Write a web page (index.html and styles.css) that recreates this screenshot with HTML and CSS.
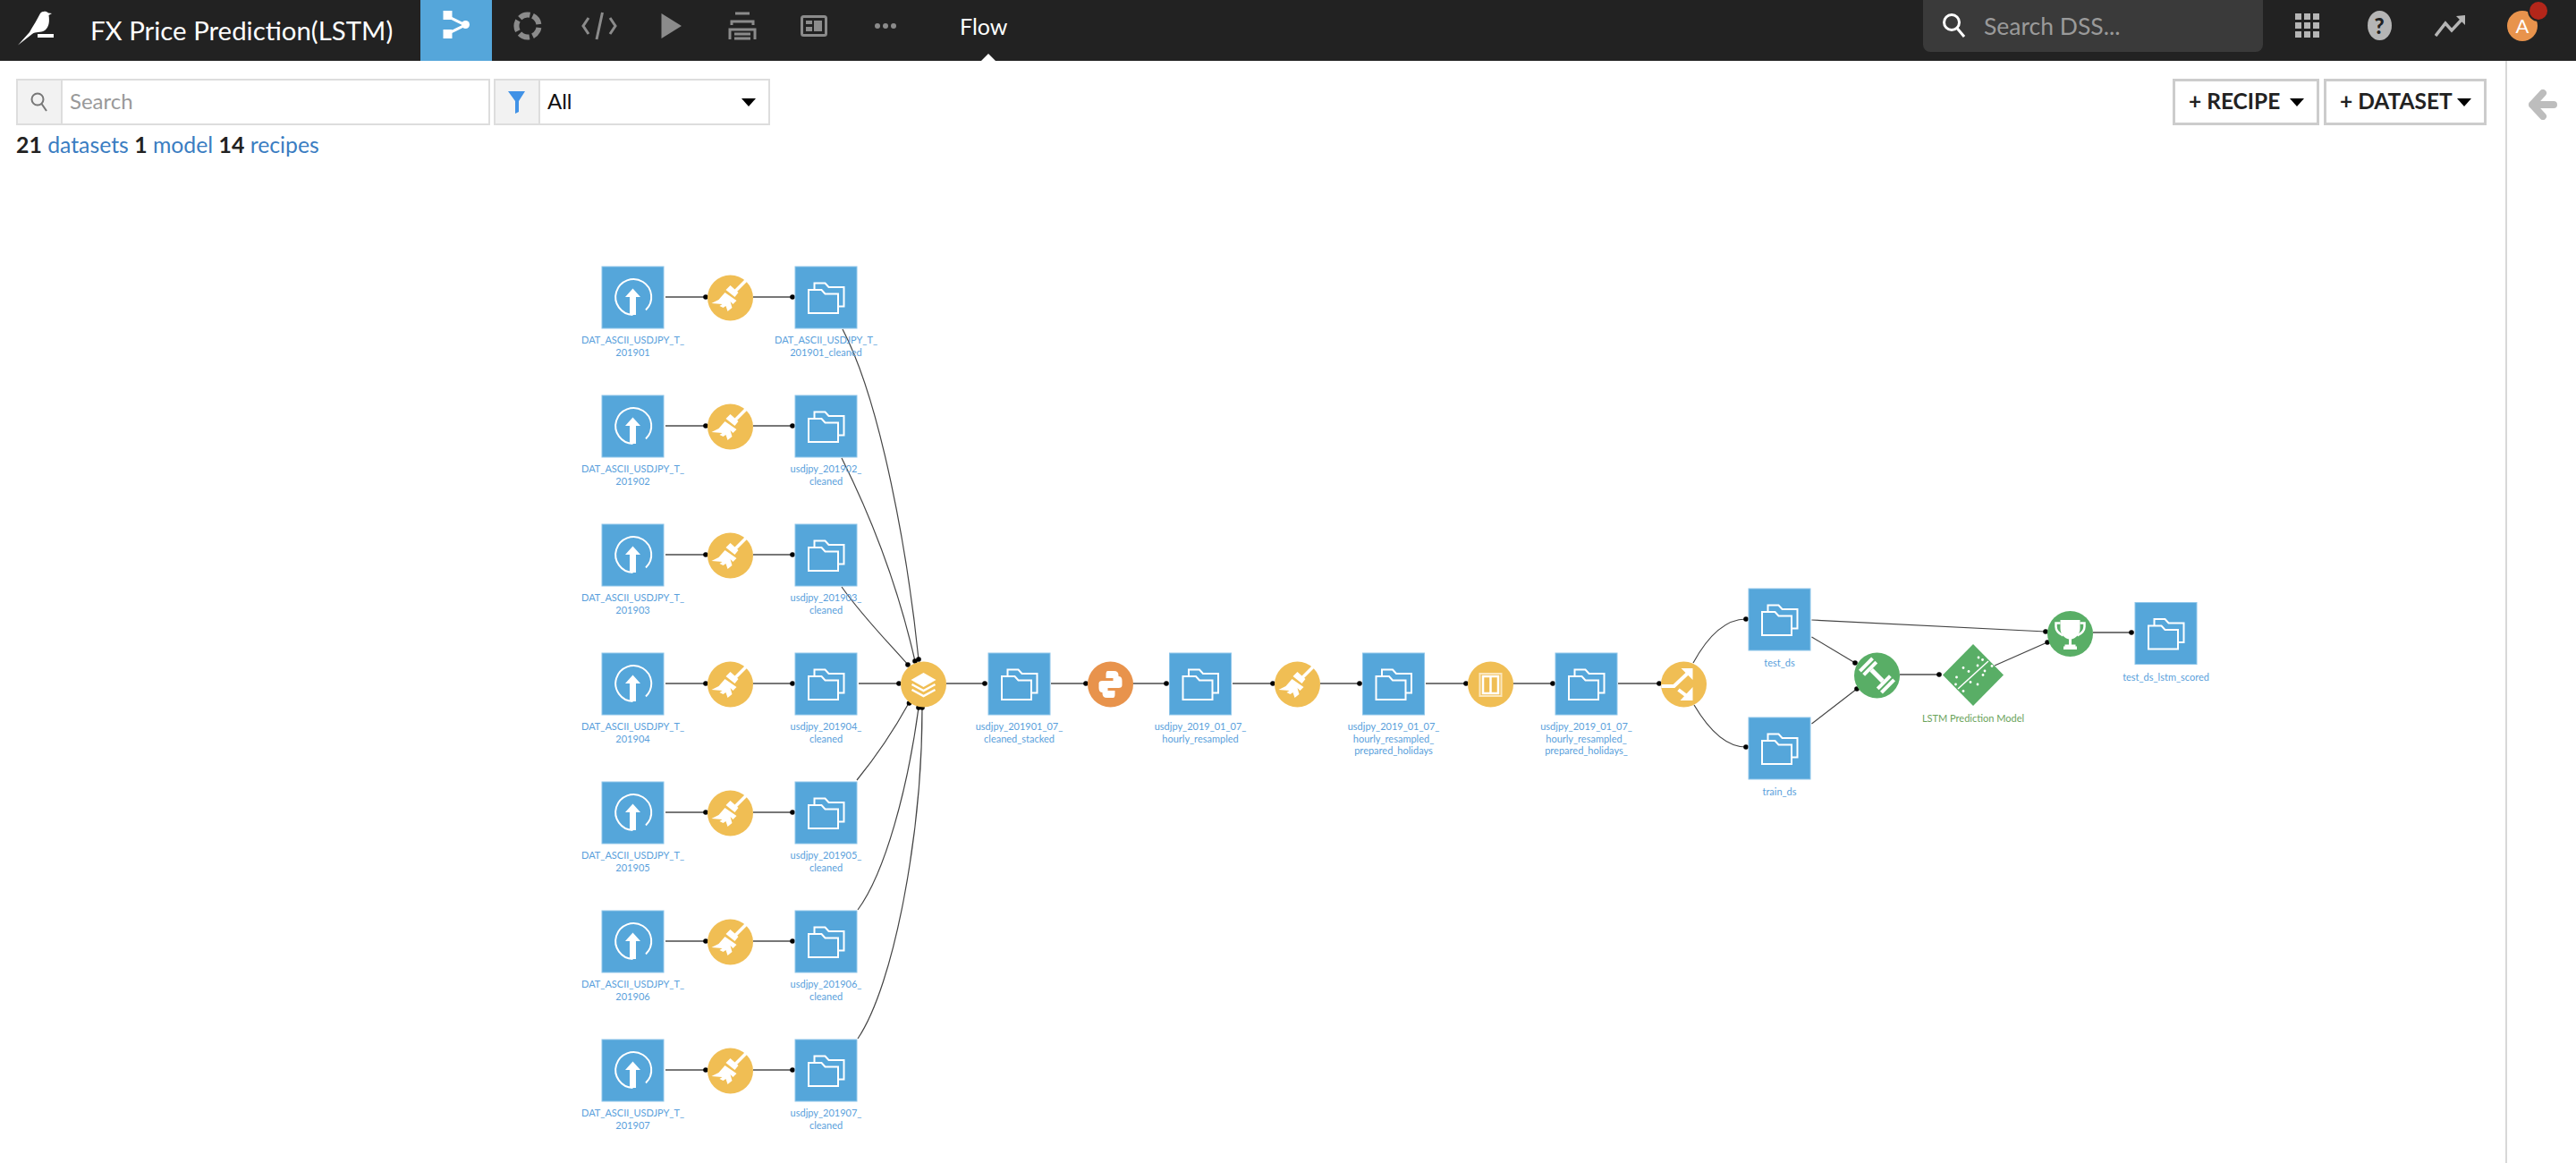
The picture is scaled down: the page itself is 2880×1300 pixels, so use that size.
FILE: index.html
```html
<!DOCTYPE html>
<html lang="en">
<head>
<meta charset="utf-8">
<title>FX Price Prediction(LSTM)</title>
<link rel="stylesheet" href="styles.css">
</head>
<body>
<header class="topbar">
  <div class="brand">
    <svg class="bird" width="78" height="68" viewBox="0 0 78 68"><path class="fill-white" d="M20 50.500 L33 36 C37 29 42 21 45 15 C47 12 52 12 54 14.500 L58 15 L54.500 17 C55.500 24 55 30 50 34 C45 37 40 35 36 38 Z"/><rect class="fill-white" x="42" y="38" width="18" height="4"/></svg>
    <span class="project">FX Price Prediction(LSTM)</span>
  </div>
  <nav class="tabs">
    <a class="tab tab-active"><svg width="40" height="40" viewBox="0 0 40 40"><path class="icon-line-white" d="M10 9 L30 19 L10 29"/><rect class="fill-white" x="5.500" y="3" width="10" height="10"/><rect class="fill-white" x="5.500" y="24" width="10" height="10"/><circle class="fill-white" cx="30.500" cy="18.500" r="4.500"/></svg></a>
    <a class="tab"><svg width="40" height="40" viewBox="0 0 40 40"><circle class="icon-ring" cx="20" cy="20" r="12.500" stroke-dasharray="12 3.700" transform="rotate(-64 20 20)"/></svg></a>
    <a class="tab"><svg width="40" height="40" viewBox="0 0 40 40"><path class="icon-line" d="M8 11 L2 20 L8 29 M32 11 L38 20 L32 29 M23.500 5 L17 35"/></svg></a>
    <a class="tab"><svg width="40" height="40" viewBox="0 0 40 40"><polygon class="fill-grey" points="9.500,6 32,20 9.500,34"/></svg></a>
    <a class="tab"><svg width="40" height="40" viewBox="0 0 40 40"><path class="icon-line" d="M12 6 H28 M8 19 V15 H32 V19 M6 35 V24 H34 V35 M11 29 H29 M11 34 H29"/></svg></a>
    <a class="tab"><svg width="40" height="40" viewBox="0 0 40 40"><rect class="icon-line" x="6.500" y="9.500" width="27" height="21" rx="2"/><rect class="fill-grey" x="11" y="14" width="7" height="4"/><rect class="fill-grey" x="11" y="21" width="7" height="5"/><rect class="fill-grey" x="20" y="14" width="9" height="12"/></svg></a>
    <a class="tab"><svg width="40" height="40" viewBox="0 0 40 40"><circle class="fill-grey" cx="11" cy="20" r="3"/><circle class="fill-grey" cx="20" cy="20" r="3"/><circle class="fill-grey" cx="29" cy="20" r="3"/></svg></a>
  </nav>
  <div class="section-name">Flow</div>
  <div class="top-right">
    <div class="global-search">
      <svg width="28" height="34" viewBox="0 0 28 34"><circle class="search-white" cx="12" cy="13" r="8.500"/><path class="search-white" d="M18 19.500 L26 29"/></svg>
      <span>Search DSS...</span>
    </div>
    <a class="tab"><svg width="28" height="28" viewBox="0 0 28 28"><g class="fill-light"><rect x="0" y="0" width="7" height="7"/><rect x="10" y="0" width="7" height="7"/><rect x="20" y="0" width="7" height="7"/><rect x="0" y="10" width="7" height="7"/><rect x="10" y="10" width="7" height="7"/><rect x="20" y="10" width="7" height="7"/><rect x="0" y="20" width="7" height="7"/><rect x="10" y="20" width="7" height="7"/><rect x="20" y="20" width="7" height="7"/></g></svg></a>
    <a class="tab"><span class="help">?</span></a>
    <a class="tab"><svg width="36" height="24" viewBox="0 0 36 24"><path class="trend" d="M1 23 L12 9 L19 17 L32 3"/><polygon class="fill-light" points="24,1 34,0 34,11"/></svg></a>
    <a class="tab avatar-tab"><span class="avatar">A</span><span class="badge"></span></a>
  </div>
</header>
<div class="page">
  <main class="canvas">
    <svg class="flow" width="2801" height="1232" viewBox="0 68 2801 1232">
      <defs>
        <g id="folder"><path class="folder-line" d="M-13 -8 V-15.500 H-1 L3 -11 H20 V10.500 H13.500"/><path class="folder-line" d="M-19.500 18 V-8 H-5 L-1 -3.500 H13.500 V18 Z"/></g>
        <g id="upload"><path class="upload-line" d="M0 20 A20 20 0 1 1 14.500 14.500"/><path class="fill-white" d="M0 -9.500 L8.500 0 H3.500 V20 H-3.500 V0 H-8.500 Z"/></g>
        <g id="broom"><path class="broom-line" d="M17.500 -19.500 L4 -6"/><polygon class="fill-white" points="-5,-9 0,-14 9,-6 5,-1"/><polygon class="fill-white" points="-6,-6 7,3 3,7 0,4 2,11 -3,15 -5,9 -8,11 -12,9 -9,7 -21,6 -13,2"/></g>
        <g id="stack"><polygon class="fill-white" points="0,-13 14,-5 0,3 -14,-5"/><path class="chev" d="M-13 0 L0 7 L13 0 M-13 6 L0 13 L13 6"/></g>
        <g id="python"><path class="fill-white" id="py-half" d="M-3 -15 H4 Q9 -15 9 -10 V-4 Q9 1 4 1 H-3 Q-6 1 -6 4 V9 H-9 Q-13 9 -13 4 V-1 Q-13 -4 -9 -4 H3 V-7 H-5 V-11 Q-5 -15 -3 -15 Z"/><use href="#py-half" transform="rotate(180)"/></g>
        <g id="sync"><rect class="sync-outer" x="-12" y="-12" width="24" height="25"/><path class="sync-inner" d="M-8.500 -9 H8.500 V10 H-8.500 Z M0 -9 V10"/></g>
        <g id="split"><path class="split-line" d="M-25 2 H-11 L6 -14"/><polygon class="fill-white" points="-3,-18 10,-18 10,-5"/><path class="split-line" d="M-6 6 L6 15"/><polygon class="fill-white" points="10,3 10,18 -4,18"/></g>
        <g id="dumbbell" transform="rotate(45)"><rect class="fill-white" x="-9" y="-2.500" width="18" height="5"/><rect class="fill-white" x="-13" y="-10" width="4" height="20"/><rect class="fill-white" x="-19" y="-10" width="4" height="20"/><rect class="fill-white" x="9" y="-10" width="4" height="20"/><rect class="fill-white" x="15" y="-10" width="4" height="20"/></g>
        <g id="trophy"><path class="fill-white" d="M-11 -15.500 H11 V-6 C11 1 6 5 1.500 6 V12 H6 V14 H7.500 V17.500 H-7.500 V14 H-6 V12 H-1.500 V6 C-6 5 -11 1 -11 -6 Z"/><path class="trophy-line" d="M-11 -12 H-16 V-8 C-16 -3 -12 0 -8 2 M11 -12 H16 V-8 C16 -3 12 0 8 2"/></g>
        <circle id="dot" r="2.800"/>
      </defs>

      <g class="edges">
        <path d="M744 332 H789"/><path d="M842 332 H886"/>
        <path d="M744 476 H789"/><path d="M842 476 H886"/>
        <path d="M744 620 H789"/><path d="M842 620 H886"/>
        <path d="M744 764 H789"/><path d="M842 764 H886"/>
        <path d="M744 908 H789"/><path d="M842 908 H886"/>
        <path d="M744 1052 H789"/><path d="M842 1052 H886"/>
        <path d="M744 1196 H789"/><path d="M842 1196 H886"/>
        <path d="M960 764 H1005"/><path d="M1058 764 H1101"/><path d="M1175 764 H1214"/><path d="M1266 764 H1304"/>
        <path d="M1378 764 H1423"/><path d="M1476 764 H1520"/><path d="M1594 764 H1639"/><path d="M1691 764 H1736"/><path d="M1809 764 H1855"/>
        <path d="M2124 754 H2168"/><path d="M2340 707 H2383"/>
      </g>
      <g class="links">
        <path d="M942 368 C985 450 1015 620 1027 737"/>
        <path d="M941 512 C975 580 1005 660 1023 739"/>
        <path d="M941 656 C965 690 995 720 1015 743"/>
        <path d="M958 872 C980 845 1000 815 1016 786"/>
        <path d="M959 1017 C990 975 1015 880 1027 791"/>
        <path d="M959 1161 C1000 1100 1031 930 1031 791"/>
        <path d="M1893 741 C1910 710 1930 692 1952 692"/>
        <path d="M1894 788 C1910 815 1930 835 1952 835"/>
        <path d="M2025.500 693 L2287 706"/>
        <path d="M2025.500 712 L2074 741"/>
        <path d="M2025.500 809 L2076 770"/>
        <path d="M2230 744 L2289 718"/>
      </g>
      <g class="dots">
        <use href="#dot" x="789" y="332"/><use href="#dot" x="886" y="332"/>
        <use href="#dot" x="789" y="476"/><use href="#dot" x="886" y="476"/>
        <use href="#dot" x="789" y="620"/><use href="#dot" x="886" y="620"/>
        <use href="#dot" x="789" y="764"/><use href="#dot" x="886" y="764"/>
        <use href="#dot" x="789" y="908"/><use href="#dot" x="886" y="908"/>
        <use href="#dot" x="789" y="1052"/><use href="#dot" x="886" y="1052"/>
        <use href="#dot" x="789" y="1196"/><use href="#dot" x="886" y="1196"/>
        <use href="#dot" x="1027" y="737"/><use href="#dot" x="1023" y="739"/><use href="#dot" x="1015" y="743"/><use href="#dot" x="1005" y="764"/><use href="#dot" x="1016.500" y="786"/><use href="#dot" x="1027" y="791"/><use href="#dot" x="1031" y="791"/>
        <use href="#dot" x="1101" y="764"/><use href="#dot" x="1214" y="764"/><use href="#dot" x="1304" y="764"/><use href="#dot" x="1423" y="764"/><use href="#dot" x="1520" y="764"/><use href="#dot" x="1639" y="764"/><use href="#dot" x="1736" y="764"/><use href="#dot" x="1855" y="764"/>
        <use href="#dot" x="1952" y="692"/><use href="#dot" x="1952" y="835"/>
        <use href="#dot" x="2074" y="741"/><use href="#dot" x="2076" y="770"/><use href="#dot" x="2168" y="754"/><use href="#dot" x="2287" y="706"/><use href="#dot" x="2289" y="718"/><use href="#dot" x="2383" y="707"/>
      </g>

      <!-- Row 1 -->
      <g transform="translate(707.500 332)"><rect class="ds" x="-34.500" y="-34" width="69" height="69"/><use href="#upload"/><text class="lbl" y="52"><tspan x="0">DAT_ASCII_USDJPY_T_</tspan><tspan x="0" dy="13.500">201901</tspan></text></g>
      <g transform="translate(816.500 333)"><circle class="rc-y" r="25.500"/><use href="#broom"/></g>
      <g transform="translate(923.500 332)"><rect class="ds" x="-34.500" y="-34" width="69" height="69"/><use href="#folder"/><text class="lbl" y="52"><tspan x="0">DAT_ASCII_USDJPY_T_</tspan><tspan x="0" dy="13.500">201901_cleaned</tspan></text></g>
      <!-- Row 2 -->
      <g transform="translate(707.500 476)"><rect class="ds" x="-34.500" y="-34" width="69" height="69"/><use href="#upload"/><text class="lbl" y="52"><tspan x="0">DAT_ASCII_USDJPY_T_</tspan><tspan x="0" dy="13.500">201902</tspan></text></g>
      <g transform="translate(816.500 477)"><circle class="rc-y" r="25.500"/><use href="#broom"/></g>
      <g transform="translate(923.500 476)"><rect class="ds" x="-34.500" y="-34" width="69" height="69"/><use href="#folder"/><text class="lbl" y="52"><tspan x="0">usdjpy_201902_</tspan><tspan x="0" dy="13.500">cleaned</tspan></text></g>
      <!-- Row 3 -->
      <g transform="translate(707.500 620)"><rect class="ds" x="-34.500" y="-34" width="69" height="69"/><use href="#upload"/><text class="lbl" y="52"><tspan x="0">DAT_ASCII_USDJPY_T_</tspan><tspan x="0" dy="13.500">201903</tspan></text></g>
      <g transform="translate(816.500 621)"><circle class="rc-y" r="25.500"/><use href="#broom"/></g>
      <g transform="translate(923.500 620)"><rect class="ds" x="-34.500" y="-34" width="69" height="69"/><use href="#folder"/><text class="lbl" y="52"><tspan x="0">usdjpy_201903_</tspan><tspan x="0" dy="13.500">cleaned</tspan></text></g>
      <!-- Row 4 -->
      <g transform="translate(707.500 764)"><rect class="ds" x="-34.500" y="-34" width="69" height="69"/><use href="#upload"/><text class="lbl" y="52"><tspan x="0">DAT_ASCII_USDJPY_T_</tspan><tspan x="0" dy="13.500">201904</tspan></text></g>
      <g transform="translate(816.500 765)"><circle class="rc-y" r="25.500"/><use href="#broom"/></g>
      <g transform="translate(923.500 764)"><rect class="ds" x="-34.500" y="-34" width="69" height="69"/><use href="#folder"/><text class="lbl" y="52"><tspan x="0">usdjpy_201904_</tspan><tspan x="0" dy="13.500">cleaned</tspan></text></g>
      <!-- Row 5 -->
      <g transform="translate(707.500 908)"><rect class="ds" x="-34.500" y="-34" width="69" height="69"/><use href="#upload"/><text class="lbl" y="52"><tspan x="0">DAT_ASCII_USDJPY_T_</tspan><tspan x="0" dy="13.500">201905</tspan></text></g>
      <g transform="translate(816.500 909)"><circle class="rc-y" r="25.500"/><use href="#broom"/></g>
      <g transform="translate(923.500 908)"><rect class="ds" x="-34.500" y="-34" width="69" height="69"/><use href="#folder"/><text class="lbl" y="52"><tspan x="0">usdjpy_201905_</tspan><tspan x="0" dy="13.500">cleaned</tspan></text></g>
      <!-- Row 6 -->
      <g transform="translate(707.500 1052)"><rect class="ds" x="-34.500" y="-34" width="69" height="69"/><use href="#upload"/><text class="lbl" y="52"><tspan x="0">DAT_ASCII_USDJPY_T_</tspan><tspan x="0" dy="13.500">201906</tspan></text></g>
      <g transform="translate(816.500 1053)"><circle class="rc-y" r="25.500"/><use href="#broom"/></g>
      <g transform="translate(923.500 1052)"><rect class="ds" x="-34.500" y="-34" width="69" height="69"/><use href="#folder"/><text class="lbl" y="52"><tspan x="0">usdjpy_201906_</tspan><tspan x="0" dy="13.500">cleaned</tspan></text></g>
      <!-- Row 7 -->
      <g transform="translate(707.500 1196)"><rect class="ds" x="-34.500" y="-34" width="69" height="69"/><use href="#upload"/><text class="lbl" y="52"><tspan x="0">DAT_ASCII_USDJPY_T_</tspan><tspan x="0" dy="13.500">201907</tspan></text></g>
      <g transform="translate(816.500 1197)"><circle class="rc-y" r="25.500"/><use href="#broom"/></g>
      <g transform="translate(923.500 1196)"><rect class="ds" x="-34.500" y="-34" width="69" height="69"/><use href="#folder"/><text class="lbl" y="52"><tspan x="0">usdjpy_201907_</tspan><tspan x="0" dy="13.500">cleaned</tspan></text></g>

      <!-- Main line -->
      <g transform="translate(1032.500 765)"><circle class="rc-y" r="25.500"/><use href="#stack"/></g>
      <g transform="translate(1139.500 764)"><rect class="ds" x="-34.500" y="-34" width="69" height="69"/><use href="#folder"/><text class="lbl" y="52"><tspan x="0">usdjpy_201901_07_</tspan><tspan x="0" dy="13.500">cleaned_stacked</tspan></text></g>
      <g transform="translate(1241.500 765)"><circle class="rc-o" r="25.500"/><use href="#python"/></g>
      <g transform="translate(1342 764)"><rect class="ds" x="-34.500" y="-34" width="69" height="69"/><use href="#folder"/><text class="lbl" y="52"><tspan x="0">usdjpy_2019_01_07_</tspan><tspan x="0" dy="13.500">hourly_resampled</tspan></text></g>
      <g transform="translate(1450.500 765)"><circle class="rc-y" r="25.500"/><use href="#broom"/></g>
      <g transform="translate(1558 764)"><rect class="ds" x="-34.500" y="-34" width="69" height="69"/><use href="#folder"/><text class="lbl" y="52"><tspan x="0">usdjpy_2019_01_07_</tspan><tspan x="0" dy="13.500">hourly_resampled_</tspan><tspan x="0" dy="13.500">prepared_holidays</tspan></text></g>
      <g transform="translate(1666.500 765)"><circle class="rc-y" r="25.500"/><use href="#sync"/></g>
      <g transform="translate(1773.500 764)"><rect class="ds" x="-34.500" y="-34" width="69" height="69"/><use href="#folder"/><text class="lbl" y="52"><tspan x="0">usdjpy_2019_01_07_</tspan><tspan x="0" dy="13.500">hourly_resampled_</tspan><tspan x="0" dy="13.500">prepared_holidays_</tspan></text></g>
      <g transform="translate(1882.500 765)"><circle class="rc-y" r="25.500"/><use href="#split"/></g>
      <g transform="translate(1989.500 692)"><rect class="ds" x="-34.500" y="-34" width="69" height="69"/><use href="#folder"/><text class="lbl" y="53"><tspan x="0">test_ds</tspan></text></g>
      <g transform="translate(1989.500 836)"><rect class="ds" x="-34.500" y="-34" width="69" height="69"/><use href="#folder"/><text class="lbl" y="53"><tspan x="0">train_ds</tspan></text></g>
      <g transform="translate(2098.500 755)"><circle class="rc-g" r="25.500"/><use href="#dumbbell"/></g>
      <g transform="translate(2206 754.500)"><polygon class="rc-g" points="-34,0 0,-34.500 34,0 0,34.500"/><text class="lbl lbl-g" y="52">LSTM Prediction Model</text></g>
      <g class="model-marks">
        <path class="model-split" d="M2189 770 L2223 739"/>
        <circle cx="2212" cy="735" r="1.400"/><circle cx="2216.500" cy="737.500" r="1.400"/><circle cx="2195" cy="746.500" r="1.400"/><circle cx="2201" cy="750.500" r="1.400"/><circle cx="2211" cy="744" r="1.400"/><circle cx="2227" cy="744.500" r="1.400"/><circle cx="2219" cy="750" r="1.400"/><circle cx="2217" cy="754.500" r="1.400"/><circle cx="2187.500" cy="757" r="1.400"/><circle cx="2186.500" cy="765" r="1.400"/><circle cx="2203" cy="762.500" r="1.400"/><circle cx="2211" cy="765" r="1.400"/><circle cx="2195" cy="772.500" r="1.400"/>
      </g>
      <g transform="translate(2314.500 708.500)"><circle class="rc-g" r="25.500"/><use href="#trophy"/></g>
      <g transform="translate(2421.500 707.500)"><rect class="ds" x="-34.500" y="-34" width="69" height="69"/><use href="#folder"/><text class="lbl" y="53.500"><tspan x="0">test_ds_lstm_scored</tspan></text></g>
    </svg>

    <div class="toolbar">
      <div class="field search-field">
        <span class="addon"><svg width="20" height="26" viewBox="0 0 20 26"><circle class="search-grey" cx="8" cy="10" r="6.500"/><path class="search-grey" d="M12.500 15 L18 23"/></svg></span>
        <span class="field-value placeholder">Search</span>
      </div>
      <div class="field filter-field">
        <span class="addon"><svg width="20" height="26" viewBox="0 0 20 26"><polygon class="funnel" points="0,1 19,1 12,12 12,24 8,26 8,12"/></svg></span>
        <span class="field-value">All</span>
        <span class="caret"></span>
      </div>
      <div class="actions">
        <button class="btn"><span class="btn-label">+ RECIPE</span><span class="caret"></span></button>
        <button class="btn"><span class="btn-label">+ DATASET</span><span class="caret"></span></button>
      </div>
    </div>
    <p class="counts"><b>21</b> <a>datasets</a> <b>1</b> <a>model</a> <b>14</b> <a>recipes</a></p>
  </main>
  <aside class="rail">
    <svg width="32" height="34" viewBox="0 0 32 34"><path class="rail-arrow" d="M16 4 L4 17 L16 30 M4 17 H28"/></svg>
  </aside>
</div>
</body>
</html>
```
FILE: styles.css
```css
* { box-sizing: border-box; }
html, body { margin: 0; height: 100%; }
body { font-family: "Lato", "Noto Sans", sans-serif; color: #222; background: #fff; overflow: hidden; }

.topbar { display: flex; align-items: stretch; height: 68px; background: #222; color: #fff; }
.brand { display: flex; align-items: center; width: 470px; flex: none; }
.bird { flex: none; margin-right: 23px; }
.project { font-size: 29.400px; white-space: nowrap; position: relative; top: -1px; }
.tabs { display: flex; flex: none; }
.tab { width: 80px; flex: none; display: flex; align-items: center; justify-content: center; padding-bottom: 11px; }
.tab-active { background: #55a6da; }
.section-name { position: relative; margin-left: 43px; font-size: 25px; line-height: 58px; height: 68px; }
.section-name::after { content: ""; position: absolute; left: 24px; bottom: 0; border: 8px solid transparent; border-top: 0; border-bottom-color: #fff; }
.top-right { display: flex; margin-left: auto; padding-right: 20px; }
.global-search { width: 380px; height: 58px; margin-right: 10px; padding-left: 20px; display: flex; align-items: center; gap: 20px; background: #3a3a3a; border-radius: 0 0 8px 8px; color: #9a9a9a; font-size: 26.500px; }
.help { width: 27px; height: 33px; border-radius: 50%; background: #b5b5b5; color: #222; font-size: 24px; font-weight: 900; display: flex; align-items: center; justify-content: center; }
.avatar-tab { position: relative; }
.avatar { width: 34px; height: 34px; border-radius: 50%; background: #e8934c; color: #fff; font-size: 22px; display: flex; align-items: center; justify-content: center; }
.badge { position: absolute; left: 48px; top: 2px; width: 20px; height: 20px; border-radius: 50%; background: #b3261a; box-shadow: 0 0 0 2px #222; }

.fill-white { fill: #fff; }
.fill-grey { fill: #8b8b8b; }
.fill-light { fill: #b5b5b5; }
.icon-line { fill: none; stroke: #8b8b8b; stroke-width: 3; }
.icon-line-white { fill: none; stroke: #fff; stroke-width: 3; }
.icon-ring { fill: none; stroke: #8b8b8b; stroke-width: 6; }
.search-white { fill: none; stroke: #fff; stroke-width: 3; }
.search-grey { fill: none; stroke: #777; stroke-width: 2; }
.trend { fill: none; stroke: #b5b5b5; stroke-width: 3.500; }
.funnel { fill: #4192e6; }

.page { display: flex; height: calc(100vh - 68px); }
.canvas { position: relative; flex: 1; min-width: 0; padding: 20px 21px 0 18px; }
.rail { width: 79px; flex: none; border-left: 2px solid #d8d8d8; padding: 32px 0 0 24px; }
.rail-arrow { fill: none; stroke: #bdbdbd; stroke-width: 8; stroke-linecap: round; stroke-linejoin: round; }

.toolbar { position: relative; display: flex; gap: 4px; height: 52px; }
.field { display: flex; align-items: center; height: 52px; border: 2px solid #ddd; background: #fff; }
.search-field { width: 530px; }
.filter-field { width: 309px; }
.addon { width: 50px; height: 100%; flex: none; display: flex; align-items: center; justify-content: center; background: #f2f2f2; border-right: 2px solid #ddd; }
.field-value { padding: 0 0 3px 8px; font-size: 24px; color: #111; flex: 1; }
.placeholder { color: #999; }
.caret { display: inline-block; flex: none; border: 8px solid transparent; border-bottom: 0; border-top: 9px solid #000; }
.filter-field .caret { margin-right: 14px; }
.actions { display: flex; gap: 5px; margin-left: auto; }
.btn { display: flex; align-items: center; justify-content: space-between; height: 52px; padding: 0 14px 0 15px; background: #fff; border: 3px solid #ccc; font-family: inherit; font-size: 24.500px; font-weight: 700; color: #222; white-space: nowrap; }
.btn-label { padding-bottom: 3px; }
.btn:first-child { width: 164px; }
.btn:last-child { width: 182px; }
.counts { position: relative; margin: 7px 0 0; font-size: 24.800px; line-height: 30px; }
.counts a { color: #3a7dc2; }

.flow { position: absolute; left: 0; top: 0; }
.edges path { fill: none; stroke: #777; stroke-width: 2; }
.links path { fill: none; stroke: #444; stroke-width: 1.200; }
.dots { fill: #000; }
.ds { fill: #55a6da; stroke: #8fc6ea; stroke-width: 1; }
.rc-y { fill: #f0be54; }
.rc-o { fill: #e8934c; }
.rc-g { fill: #59ae66; }
.lbl { font-size: 11px; fill: #5a9fdc; text-anchor: middle; }
.lbl-g { fill: #6aa35a; }
.folder-line { fill: none; stroke: #fff; stroke-width: 2; }
.upload-line { fill: none; stroke: #fff; stroke-width: 2; }
.broom-line { fill: none; stroke: #fff; stroke-width: 3.500; }
.chev { fill: none; stroke: #fff; stroke-width: 2.500; }
.sync-outer { fill: none; stroke: #fbe7bd; stroke-width: 2; }
.sync-inner { fill: none; stroke: #fff; stroke-width: 2.500; }
.split-line { fill: none; stroke: #fff; stroke-width: 4; }
.trophy-line { fill: none; stroke: #fff; stroke-width: 2.500; }
.model-split { fill: none; stroke: #fff; stroke-width: 1.500; }
.model-marks circle { fill: #fff; }
```
